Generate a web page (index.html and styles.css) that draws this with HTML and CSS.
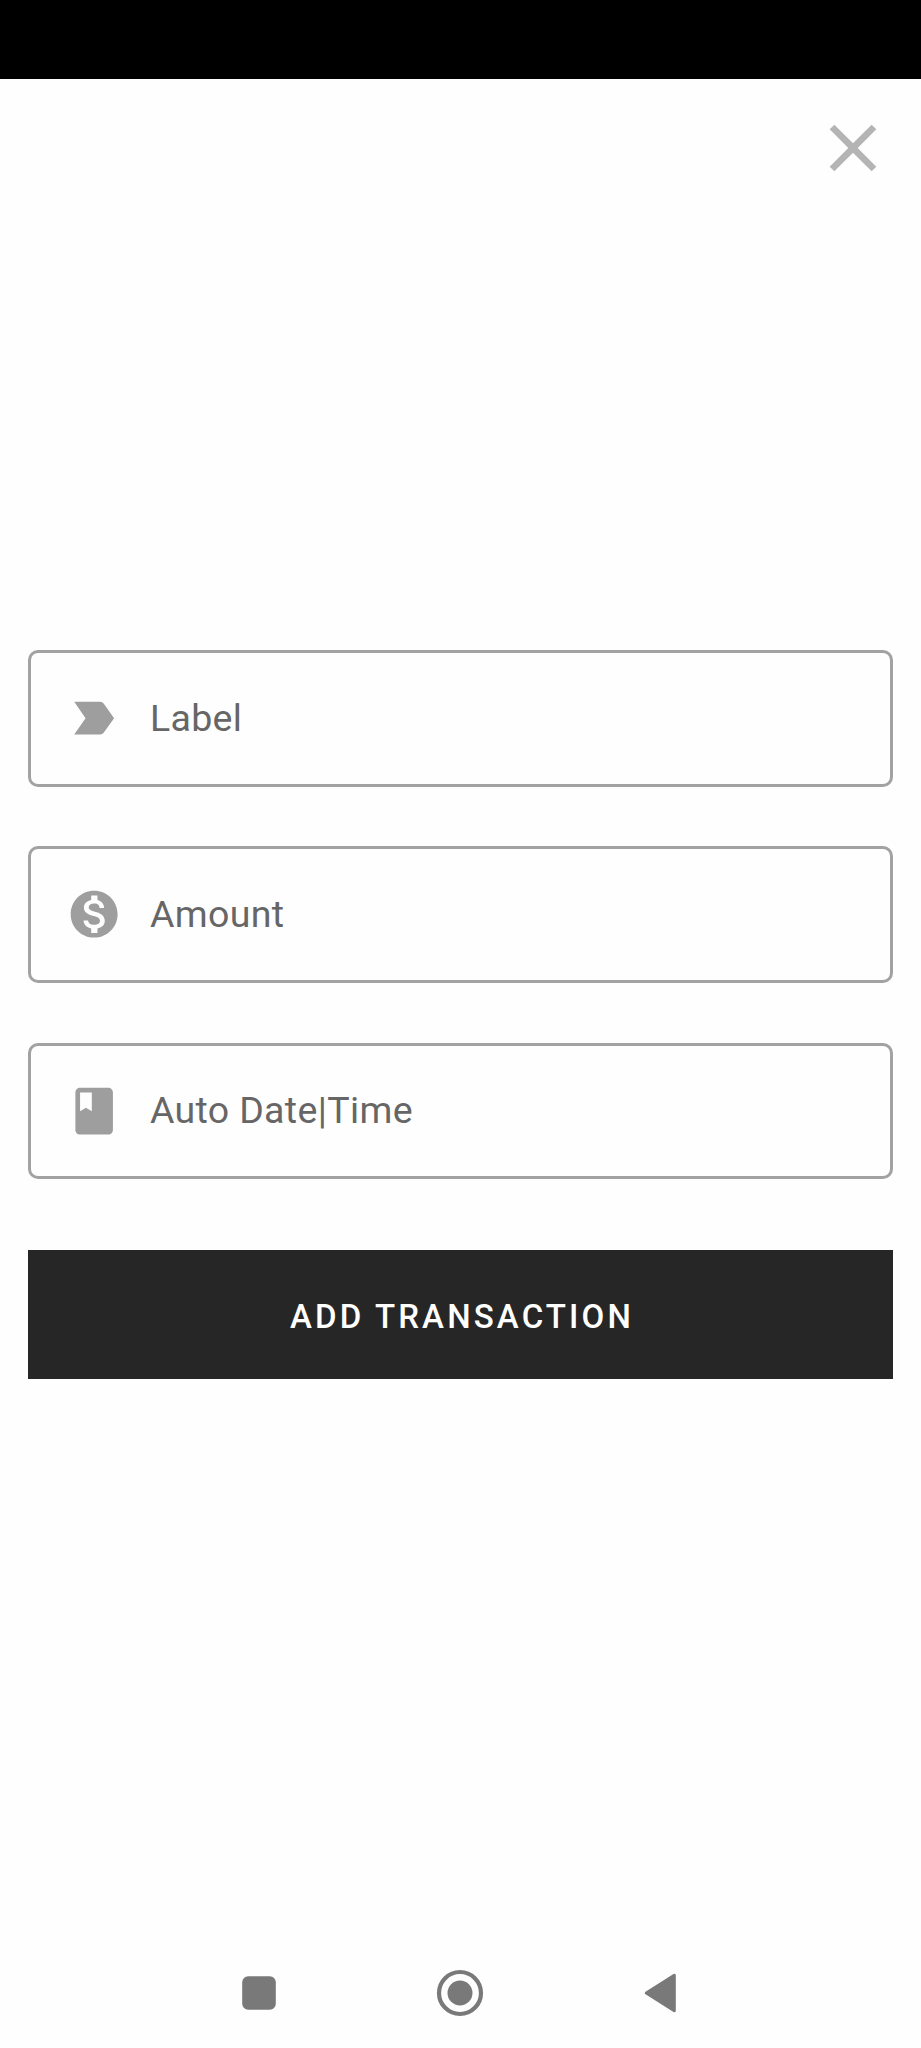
FILE: index.html
```html
<!DOCTYPE html>
<html lang="en">
<head>
<meta charset="utf-8">
<title>Add Transaction</title>
<link rel="stylesheet" href="styles.css">
</head>
<body>
<div class="screen">
  <div class="status-bar"></div>
  <header class="top">
    <button class="close" aria-label="Close">
      <svg viewBox="0 0 24 24"><path d="M19 6.41L17.59 5 12 10.59 6.41 5 5 6.41 10.59 12 5 17.59 6.41 19 12 13.41 17.59 19 19 17.59 13.41 12z"/></svg>
    </button>
  </header>
  <main class="form">
    <div class="field">
      <svg class="icon" viewBox="0 0 24 24"><path d="M3.5 18.99l11 .01c.67 0 1.27-.33 1.63-.84L20.5 12l-4.37-6.16c-.36-.51-.96-.84-1.63-.84l-11 .01L8.34 12 3.5 18.99z"/></svg>
      <span class="hint">Label</span>
    </div>
    <div class="field">
      <svg class="icon" viewBox="0 0 24 24"><path d="M12 2C6.48 2 2 6.48 2 12s4.48 10 10 10 10-4.48 10-10S17.52 2 12 2zm1.41 16.09V20h-2.67v-1.93c-1.71-.36-3.16-1.46-3.27-3.4h1.96c.1 1.05.82 1.87 2.65 1.87 1.96 0 2.4-.98 2.4-1.59 0-.83-.44-1.61-2.67-2.14-2.48-.6-4.18-1.62-4.18-3.67 0-1.72 1.39-2.84 3.11-3.21V4h2.67v1.95c1.86.45 2.79 1.86 2.85 3.39H14.3c-.05-1.11-.64-1.87-2.22-1.87-1.5 0-2.4.68-2.4 1.64 0 .84.65 1.39 2.67 1.91s4.18 1.39 4.18 3.91c-.01 1.83-1.38 2.83-3.12 3.16z"/></svg>
      <span class="hint">Amount</span>
    </div>
    <div class="field">
      <svg class="icon" viewBox="0 0 24 24"><path d="M18 2H6c-1.1 0-2 .9-2 2v16c0 1.1.9 2 2 2h12c1.1 0 2-.9 2-2V4c0-1.1-.9-2-2-2zM6 4h5v8l-2.5-1.5L6 12V4z"/></svg>
      <span class="hint">Auto Date|Time</span>
    </div>
    <button class="submit">ADD TRANSACTION</button>
  </main>
  <nav class="nav-bar">
    <svg class="nav-icon" viewBox="0 0 48 48"><rect x="7.2" y="7.2" width="33.6" height="33.6" rx="6"/></svg>
    <svg class="nav-icon" viewBox="0 0 48 48"><circle class="ring" cx="24" cy="24" r="21"/><circle cx="24" cy="24" r="12.5"/></svg>
    <svg class="nav-icon" viewBox="0 0 48 48"><path class="back" d="M9.3 24L37.3 6.3V41.7z"/></svg>
  </nav>
</div>
</body>
</html>
```
FILE: styles.css
```css
* {
  box-sizing: border-box;
}

body {
  margin: 0;
  background: #fefefe;
  font-family: Roboto, "Liberation Sans", sans-serif;
}

button {
  border: 0;
  padding: 0;
  font: inherit;
}

.screen {
  display: flex;
  flex-direction: column;
  width: 921px;
  height: 2048px;
}

.status-bar {
  height: 79px;
  background: #000;
}

.top {
  display: flex;
  justify-content: flex-end;
  padding: 28.5px 28.3px 0 0;
  height: 571px;
}

.close {
  width: 80px;
  height: 80px;
  background: none;
}

.close svg {
  display: block;
  width: 80px;
  height: 80px;
  fill: #b4b4b4;
}

.form {
  display: flex;
  flex-direction: column;
  flex: 1;
  padding: 0 28px;
}

.field {
  display: flex;
  align-items: center;
  gap: 28px;
  height: 136.6px;
  margin-bottom: 59.7px;
  padding-left: 34.6px;
  border: 3px solid #a2a2a2;
  border-radius: 10px;
}

.icon {
  width: 56.3px;
  height: 56.3px;
  fill: #9e9e9e;
}

.hint {
  padding-bottom: 1px;
  color: #666;
  font-size: 37.5px;
  line-height: 44px;
  letter-spacing: 0.35px;
}

.submit {
  height: 129px;
  margin-top: 11px;
  padding: 4px 0 0 3px;
  background: #262626;
  color: #fff;
  font-size: 33px;
  font-weight: 500;
  letter-spacing: 3.15px;
}

.nav-bar {
  display: flex;
  justify-content: center;
  gap: 153px;
  height: 79.5px;
  padding-right: 2px;
}

.nav-icon {
  width: 48px;
  height: 48px;
  fill: #797979;
}

.ring {
  fill: none;
  stroke: #797979;
  stroke-width: 4.2;
}

.back {
  stroke: #797979;
  stroke-width: 3;
  stroke-linejoin: round;
}
```
